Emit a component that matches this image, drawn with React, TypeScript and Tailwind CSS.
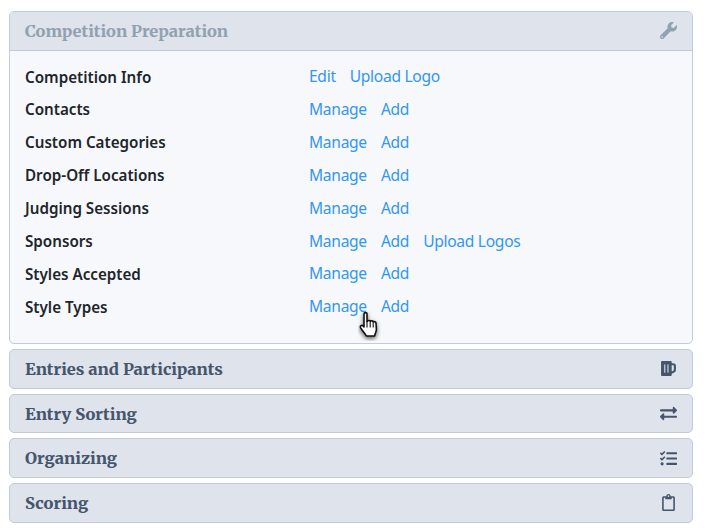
import { FaBeer, FaExchangeAlt, FaRegClipboard, FaTasks, FaWrench } from "react-icons/fa";
import type { ReactNode } from "react";

const rows = [
  { name: "Competition Info", links: ["Edit", "Upload Logo"] },
  { name: "Contacts", links: ["Manage", "Add"] },
  { name: "Custom Categories", links: ["Manage", "Add"] },
  { name: "Drop-Off Locations", links: ["Manage", "Add"] },
  { name: "Judging Sessions", links: ["Manage", "Add"] },
  { name: "Sponsors", links: ["Manage", "Add", "Upload Logos"] },
  { name: "Styles Accepted", links: ["Manage", "Add"] },
  { name: "Style Types", links: ["Manage", "Add"] },
];

const Heading = ({ title, icon, muted }: { title: string; icon: ReactNode; muted?: boolean }) => (
  <div className={`flex h-[37.7px] items-center justify-between px-[15px] ${muted ? "text-[#90a2b0]" : "text-[#45566c]"}`}>
    <h2 className="pt-[1px] font-['Merriweather','Liberation_Serif',serif] text-[16.4px] font-extrabold">{title}</h2>
    <span className="text-[17px]">{icon}</span>
  </div>
);

const Closed = ({ title, icon }: { title: string; icon: ReactNode }) => (
  <section className="rounded-[5px] border border-[#c1cbdc] bg-[#dfe3eb]">
    <Heading title={title} icon={icon} />
  </section>
);

// pointer cursor over the last Manage link
const HandCursor = () => (
  <svg className="absolute left-[358px] top-[311px]" width="23" height="30" viewBox="0 0 23 30">
    <path
      d="M6 3c0-1.8 3-1.8 3 0v7.4l.5-.2c.6-1 2.500-.9 2.900.1.7-.8 2.500-.6 2.900.5 1-.5 2.600 0 2.700 1.300l.4 6.300c.1 2-1 3.600-1.500 5l-.2 1.600H8.400c-.8-1.800-3.200-4.200-5.700-8-1.100-2 1.100-3.400 2.400-2l.9.900z"
      fill="#fff"
      stroke="#111"
      strokeWidth="1.6"
      strokeLinejoin="round"
      style={{ filter: "drop-shadow(0 2px 2px rgba(0,0,0,.6))" }}
    />
    <path d="M9 10v6.500M12.200 10.500v6M15.200 11v5.500" stroke="#111" strokeWidth="1.100" fill="none" />
  </svg>
);

const App = () => {
  return (
    <div className="relative flex h-[532px] w-[705px] flex-col gap-[5px] bg-white pl-[9px] pr-[12px] pt-[11px] font-['Noto_Sans',sans-serif]">
      <section className="rounded-[5px] border border-[#c1cbdc] bg-[#f6f8fb]">
        <div className="border-b border-[#c1cbdc] bg-[#dfe3eb]">
          <Heading title="Competition Preparation" icon={<FaWrench />} muted />
        </div>
        <div className="flex h-[292.3px] flex-col pl-[15px] pt-[9.9px]">
          {rows.map((row) => (
            <div key={row.name} className="flex h-[32.85px] items-center text-[15.2px]">
              <div className="w-[284px] font-semibold text-[#212529]">{row.name}</div>
              <div className="flex gap-[14px] text-[15.6px] tracking-[-0.3px] text-[#3396f3]">
                {row.links.map((link) => (
                  <a key={link} href="#" className="whitespace-nowrap">
                    {link}
                  </a>
                ))}
              </div>
            </div>
          ))}
        </div>
      </section>
      <Closed title="Entries and Participants" icon={<FaBeer />} />
      <Closed title="Entry Sorting" icon={<FaExchangeAlt />} />
      <Closed title="Organizing" icon={<FaTasks />} />
      <Closed title="Scoring" icon={<FaRegClipboard />} />
      <HandCursor />
    </div>
  );
};

export default App;
